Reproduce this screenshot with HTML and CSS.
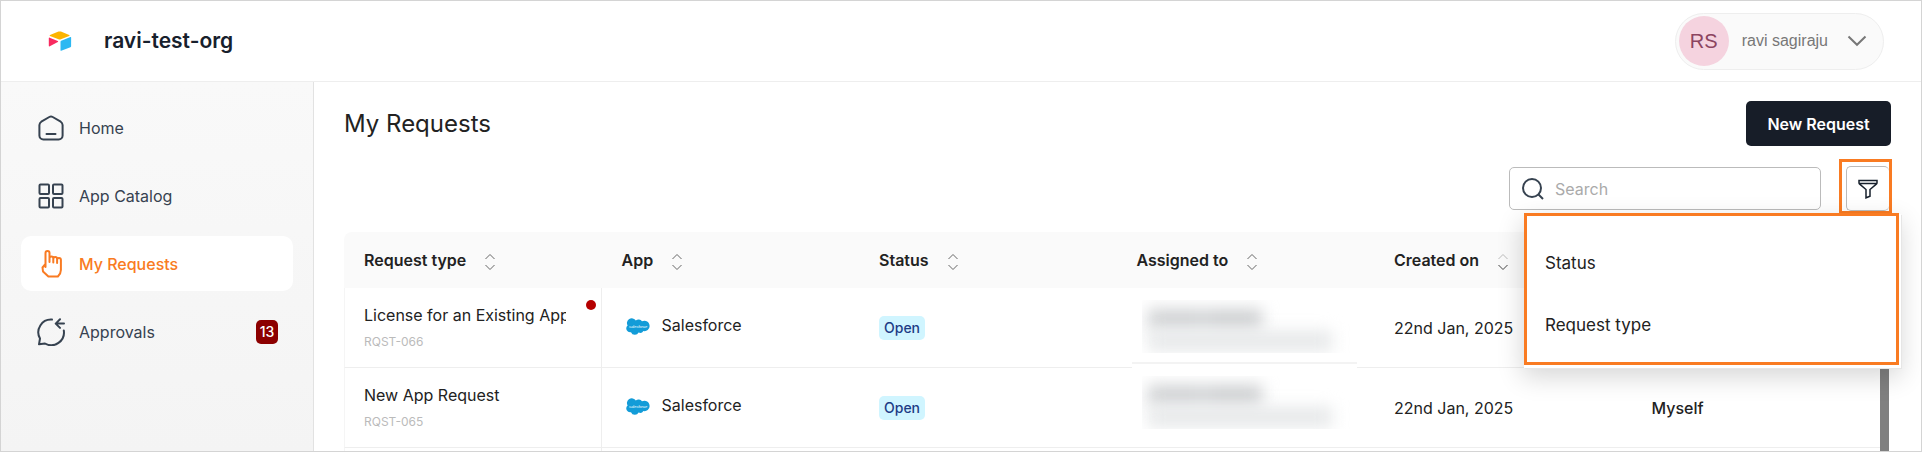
FILE: index.html
```html
<!DOCTYPE html>
<html lang="en">
<head>
  <meta charset="utf-8">
  <title>My Requests</title>
  <link rel="stylesheet" href="styles.css">
</head>
<body>

<svg class="sprite" aria-hidden="true">
  <symbol id="sort" viewBox="0 0 12 18">
    <path class="up" d="M1.500 6 6 1.500 10.500 6"/>
    <path d="M1.500 12 6 16.500 10.500 12"/>
  </symbol>
  <symbol id="cloud" viewBox="0 0 24 18">
    <path fill="#139cd8" d="M9.800 2.600A4.300 4.300 0 0 1 16 3.300 5.200 5.200 0 0 1 23.600 8a5 5 0 0 1-6.200 5A3.800 3.800 0 0 1 12.600 14.600 4.200 4.200 0 0 1 5 14.200 3.900 3.900 0 0 1 1.600 7.500 4.400 4.400 0 0 1 9.800 2.600z"/>
    <text x="12" y="10" text-anchor="middle" class="cloud-name">salesforce</text>
  </symbol>
</svg>

<header class="topbar">
  <svg class="logo" viewBox="0 0 40 40" aria-hidden="true">
    <path fill="#fcb400" d="M19.500 10.600q1.200-.4 2.400 0l8.300 3.400q.9.500 0 .9l-8.300 3.300q-1.200.5-2.400 0L11 14.900q-.9-.4 0-.9z"/>
    <path fill="#f82b60" d="M9.800 17.200q0-.9.900-.5l8.100 3.400q.8.500 0 .9l-8 4.300q-1 .4-1-.5z"/>
    <path fill="#2cb8f2" d="M21.500 20.700q0-.7.700-1l9.200-3.600q.7-.2.700.5v8.700q0 .7-.7 1l-9.200 3.400q-.7.200-.7-.5z"/>
  </svg>
  <div class="org">ravi-test-org</div>
  <button class="user" type="button">
    <span class="avatar">RS</span>
    <span>ravi sagiraju</span>
    <svg class="chevron" width="20" height="12" viewBox="0 0 20 12"><path d="M1.500 1.500 10 9.800l8.500-8.300"/></svg>
  </button>
</header>

<div class="page">
  <nav class="sidebar">
    <a href="#home">
      <svg viewBox="0 0 28 28"><path d="M12.300 3a3.500 3.500 0 0 1 3.400 0l8 4.700A4.600 4.600 0 0 1 25.600 11v10.500a4 4 0 0 1-4 4H6.400a4 4 0 0 1-4-4V11a4.600 4.600 0 0 1 1.900-3.300zM9.500 20h9"/></svg>
      <span>Home</span>
    </a>
    <a href="#catalog">
      <svg viewBox="0 0 28 28"><rect x="2.500" y="2.500" width="9.500" height="9.500" rx="1"/><rect x="16" y="2.500" width="9.500" height="9.500" rx="1"/><rect x="2.500" y="16" width="9.500" height="9.500" rx="1"/><rect x="16" y="16" width="9.500" height="9.500" rx="1"/></svg>
      <span>App Catalog</span>
    </a>
    <a href="#requests" class="active">
      <svg viewBox="0 0 28 28"><path d="M8.500 17V3a2 2 0 0 1 4 0v9V8.500a1.900 1.900 0 0 1 3.800 0V12.500 9a1.900 1.900 0 0 1 3.800 0v4-3.200a1.900 1.900 0 0 1 3.800 0V20q0 3.500-3 6.500h-9.500L6 21.500l-.5-4L8.500 14"/></svg>
      <span>My Requests</span>
    </a>
    <a href="#approvals">
      <svg viewBox="0 0 28 28"><path d="M15 1.600A12.700 12.700 0 0 0 3 20.500L2 26.300l6-.8a12.700 12.700 0 0 0 18.800-13M27 5.600h-8M23 1.300l-4.300 4.300L23 9.900"/></svg>
      <span>Approvals</span>
      <b class="count">13</b>
    </a>
  </nav>

  <main>
    <div class="title-row">
      <h1>My Requests</h1>
      <button class="new" type="button">New Request</button>
    </div>

    <div class="tools">
      <label class="search">
        <svg width="24" height="24" viewBox="0 0 24 24"><circle cx="11" cy="11" r="9"/><path d="m17.500 17.500 4.500 4.500"/></svg>
        <input type="search" placeholder="Search" aria-label="Search">
      </label>
      <div class="filter">
        <button type="button" aria-label="Filter">
          <svg width="20" height="20" viewBox="0 0 20 20"><path d="M1 1.500h18v2.200q0 .9-.7 1.400L12 10.500v6.800l-4 1.500v-8.300L1.700 5.100Q1 4.600 1 3.700zM1.500 4.500h17"/></svg>
        </button>
        <div class="menu">
          <a href="#status">Status</a>
          <a href="#type">Request type</a>
        </div>
      </div>
    </div>

    <div class="table-wrap">
      <table>
        <thead>
          <tr>
            <th>Request type <svg class="sort"><use href="#sort"/></svg></th>
            <th>App <svg class="sort"><use href="#sort"/></svg></th>
            <th>Status <svg class="sort"><use href="#sort"/></svg></th>
            <th>Assigned to <svg class="sort"><use href="#sort"/></svg></th>
            <th>Created on <svg class="sort desc"><use href="#sort"/></svg></th>
            <th></th>
          </tr>
        </thead>
        <tbody>
          <tr>
            <td class="request unread"><div class="name">License for an Existing App</div><small>RQST-066</small></td>
            <td><div class="app"><svg><use href="#cloud"/></svg>Salesforce</div></td>
            <td><span class="tag">Open</span></td>
            <td class="person"><div class="redacted"><i></i><i></i></div></td>
            <td>22nd Jan, 2025</td>
            <td></td>
          </tr>
          <tr>
            <td class="request"><div class="name">New App Request</div><small>RQST-065</small></td>
            <td><div class="app"><svg><use href="#cloud"/></svg>Salesforce</div></td>
            <td><span class="tag">Open</span></td>
            <td class="person"><div class="redacted"><i></i><i></i></div></td>
            <td>22nd Jan, 2025</td>
            <td class="for">Myself</td>
          </tr>
          <tr>
            <td class="request"></td>
            <td></td>
            <td></td>
            <td></td>
            <td></td>
            <td></td>
          </tr>
        </tbody>
      </table>
    </div>
  </main>
</div>

</body>
</html>
```
FILE: styles.css
```css
* {
    box-sizing: border-box;
}

body {
    margin: 0;
    height: 100vh;
    display: flex;
    flex-direction: column;
    overflow: hidden;
    border: 1px solid #d4d4d4;
    background: #fff;
    color: #222;
    font: 16px/24px Inter, sans-serif;
}

a {
    color: inherit;
    text-decoration: none;
}

button, input {
    font: inherit;
}

svg {
    fill: none;
    flex: none;
}

.sprite {
    display: none;
}

/* top bar */

.topbar {
    flex: none;
    display: flex;
    align-items: center;
    height: 81px;
    padding: 0 37px 0 38px;
    border-bottom: 1px solid #eee;
}

.logo {
    width: 40px;
    height: 40px;
}

.org {
    margin-left: 25px;
    color: #17202c;
    font-size: 21px;
    font-weight: 600;
}

.user {
    display: flex;
    align-items: center;
    height: 57px;
    margin-left: auto;
    padding: 0 16px 0 3px;
    border: 1px solid #eee;
    border-radius: 29px;
    background: #fafafa;
    color: #777;
    font-family: "Liberation Sans", sans-serif;
}

.avatar {
    width: 50px;
    margin-right: 13px;
    border-radius: 50%;
    background: #f5d3df;
    color: #8c4460;
    font-size: 20px;
    line-height: 50px;
}

.chevron {
    margin-left: 19px;
    stroke: #777;
    stroke-width: 2;
}

/* sidebar */

.page {
    flex: 1;
    display: flex;
    min-height: 0;
}

.sidebar {
    flex: none;
    display: flex;
    flex-direction: column;
    gap: 13px;
    width: 313px;
    padding: 18px 20px;
    border-right: 1px solid #e2e2e2;
    background: linear-gradient(#f9f9f9, #f4f4f4);
    color: #364250;
}

.sidebar a {
    display: flex;
    align-items: center;
    height: 55px;
    padding: 0 15px;
    border-radius: 10px;
}

.sidebar svg {
    width: 28px;
    height: 28px;
    margin: 0 14px 0 1px;
    stroke: currentColor;
    stroke-width: 2;
    stroke-linecap: round;
    stroke-linejoin: round;
}

.sidebar .active {
    background: #fff;
    color: #f97b22;
    font-weight: 500;
}

.count {
    width: 22px;
    margin-left: auto;
    border-radius: 5px;
    background: #8c0000;
    color: #fff;
    font-size: 14px;
    font-weight: 500;
    text-align: center;
}

/* content */

main {
    flex: 1;
    min-width: 0;
    padding: 19px 29px 0 30px;
    overflow: hidden;
}

.title-row, .tools {
    display: flex;
    align-items: center;
    justify-content: space-between;
}

h1 {
    margin: 0;
    font-size: 24px;
    font-weight: 400;
}

.new {
    height: 45px;
    width: 145px;
    margin-right: 1px;
    border: 0;
    border-radius: 5px;
    background: #171d28;
    color: #fff;
    font-weight: 600;
}

.tools {
    justify-content: flex-end;
    align-items: flex-start;
    gap: 18px;
    margin-top: 13px;
}

.search {
    display: flex;
    align-items: center;
    width: 312px;
    height: 43px;
    margin-top: 8px;
    padding: 0 11px;
    border: 1px solid #bbb;
    border-radius: 5px;
}

.search svg {
    stroke: #364250;
    stroke-width: 2;
}

.search input {
    min-width: 0;
    margin-left: 10px;
    padding: 0;
    border: 0;
    outline: 0;
}

.search input::placeholder {
    color: #aaa;
}

.filter {
    position: relative;
    width: 53px;
    height: 55px;
    padding: 4px 0 0 4px;
    border: 3px solid #f97b22;
}

.filter button {
    display: flex;
    align-items: center;
    justify-content: center;
    width: 43px;
    height: 45px;
    padding: 0;
    border: 1px solid #bbb;
    border-right: 0;
    border-radius: 5px;
    background: #fff;
}

.filter svg {
    stroke: #17202c;
    stroke-width: 1.5;
}

.menu {
    position: absolute;
    z-index: 2;
    top: 51px;
    right: -10px;
    width: 375px;
    height: 152px;
    padding: 35px 18px;
    border: 3px solid #f97b22;
    background: #fff;
    box-shadow: 1px 2px 0 1px #fff, 2px 3px 0 1px #e6e6e6, 0 10px 24px 2px rgba(0, 0, 0, .16);
    font-size: 17px;
}

.menu a {
    display: block;
    margin-bottom: 38px;
}

/* request table */

.table-wrap {
    position: relative;
    margin: 18px 3px 0 0;
}

.table-wrap::after {
    content: "";
    position: absolute;
    top: 56px;
    right: 0;
    bottom: 0;
    width: 9px;
    background: #808080;
}

table {
    width: 100%;
    table-layout: fixed;
    border-spacing: 0;
}

th, td {
    padding: 0 20px;
    text-align: left;
    white-space: nowrap;
}

th {
    height: 56px;
    background: #fafafa;
    font-weight: 600;
}

th:first-child {
    border-top-left-radius: 8px;
}

.sort {
    width: 12px;
    height: 18px;
    margin-left: 14px;
    vertical-align: middle;
    stroke: #666;
}

.up {
    stroke: var(--up);
}

.desc {
    --up: #bbb;
    stroke: #444;
}

td {
    height: 80px;
    border-bottom: 1px solid #eee;
}

.request {
    position: relative;
    border-left: 1px solid #f5f5f5;
    border-right: 1px solid #eee;
    padding-left: 19px;
}

.unread::after {
    content: "";
    position: absolute;
    top: 12px;
    right: 5px;
    width: 10px;
    height: 10px;
    border-radius: 50%;
    background: #b50000;
}

.name {
    width: 202px;
    margin-top: 2px;
    overflow: hidden;
}

small {
    display: block;
    margin-top: 3px;
    color: #bbb;
    font-size: 12px;
}

.app {
    display: flex;
    align-items: center;
    margin-bottom: 6px;
}

.app svg {
    width: 24px;
    height: 18px;
    margin: 4px 12px 0 4px;
}

.cloud-name {
    fill: #fff;
    font: italic 4px "Liberation Sans", sans-serif;
}

.tag {
    display: inline-block;
    padding: 0 5px;
    border-radius: 5px;
    background: #d0f5ff;
    color: #1d3c86;
    font-size: 14px;
    font-weight: 500;
}

/* masked name and e-mail */

.person {
    position: relative;
}

.unread ~ .person::after {
    content: "";
    position: absolute;
    right: 17px;
    bottom: -1px;
    left: 15px;
    height: 4px;
    border-top: 2px solid #f3f3f3;
    background: #fff;
}

.redacted {
    width: 210px;
    height: 53px;
    margin: 0 0 2px 5px;
    padding: 9px 6px;
    overflow: hidden;
}

tr:nth-child(2) .redacted {
    margin-bottom: 10px;
}

.redacted i {
    display: block;
    width: 114px;
    height: 20px;
    background: linear-gradient(90deg, #cfd1d3 42%, #d6d8da 50%, #cdcfd1 56%);
    filter: blur(8px);
}

.redacted i + i {
    width: 184px;
    height: 20px;
    margin-top: 2px;
    background: #e6e8e9;
}

.for {
    font-weight: 500;
}
```
